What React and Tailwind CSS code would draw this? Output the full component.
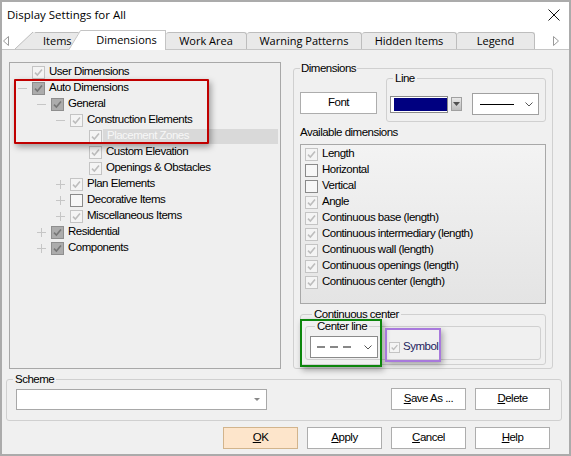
import React from 'react';

const UI = 'font-[Liberation_Sans,Arial,sans-serif] tracking-[-0.5px]';
const SEGOE = 'font-[Open_Sans,Noto_Sans,sans-serif]';

// checkbox in the three looks the dialog uses
function Check({ kind = 'light', size = 13 }) {
  const box = {
    light: 'border-[#c4c4c4] bg-[#f4f4f4]',
    gray: 'border-[#8e8e8e] bg-[#acacac]',
    empty: 'border-[#8a8a8a] bg-[#f7f7f7]',
  }[kind];
  const dim = size === 13 ? 'h-[13px] w-[13px]' : 'h-[11px] w-[11px]';
  const stroke = kind === 'gray' ? '#767676' : '#bdbdbd';
  return (
    <span className={`flex shrink-0 items-center justify-center border ${dim} ${box}`}>
      {kind !== 'empty' && (
        <svg width={size - 2} height={size - 2} viewBox="0 0 11 11">
          <path d="M2 5.6 L4.4 8 L9 2.6" fill="none" stroke={stroke} strokeWidth="1.6" />
        </svg>
      )}
    </span>
  );
}

function Expander({ type }) {
  if (!type) return <span className="w-[14px] shrink-0" />;
  return (
    <span className="flex w-[14px] shrink-0 items-center">
      <svg width="9" height="9" viewBox="0 0 9 9">
        <path d="M0 4.5 H9" stroke="#c6c6c6" strokeWidth="1" />
        {type === 'plus' && <path d="M4.5 0 V9" stroke="#c6c6c6" strokeWidth="1" />}
      </svg>
    </span>
  );
}

const indent = ['pl-[8px]', 'pl-[27px]', 'pl-[46px]', 'pl-[65px]'];

const tree = [
  { label: 'User Dimensions', level: 0, box: 'light' },
  { label: 'Auto Dimensions', level: 0, box: 'gray', exp: 'minus' },
  { label: 'General', level: 1, box: 'gray', exp: 'minus' },
  { label: 'Construction Elements', level: 2, box: 'light', exp: 'minus' },
  { label: 'Placement Zones', level: 3, box: 'light', selected: true },
  { label: 'Custom Elevation', level: 3, box: 'light' },
  { label: 'Openings & Obstacles', level: 3, box: 'light' },
  { label: 'Plan Elements', level: 2, box: 'light', exp: 'plus' },
  { label: 'Decorative Items', level: 2, box: 'empty', exp: 'plus' },
  { label: 'Miscellaneous Items', level: 2, box: 'light', exp: 'plus' },
  { label: 'Residential', level: 1, box: 'gray', exp: 'plus' },
  { label: 'Components', level: 1, box: 'gray', exp: 'plus' },
];

const dims = [
  ['Length', 'light'],
  ['Horizontal', 'empty'],
  ['Vertical', 'empty'],
  ['Angle', 'light'],
  ['Continuous base (length)', 'light'],
  ['Continuous intermediary (length)', 'light'],
  ['Continuous wall (length)', 'light'],
  ['Continuous openings (length)', 'light'],
  ['Continuous center (length)', 'light'],
];

const tabs = [
  { label: 'Items', w: 'w-[49px] justify-start pl-[10px]' },
  { label: 'Dimensions', w: 'w-[84px] justify-center' },
  { label: 'Work Area', w: 'w-[81px] justify-center' },
  { label: 'Warning Patterns', w: 'w-[115px] justify-center' },
  { label: 'Hidden Items', w: 'w-[95px] justify-center' },
  { label: 'Legend', w: 'w-[78px] justify-center' },
];

function Button({ children, w = 'w-[75px]', ok }) {
  return (
    <div
      className={`flex h-[22px] items-center justify-center border text-[11.5px] text-black ${UI} ${w} ${
        ok ? 'border-[#d2b48c] bg-[#fde5cb]' : 'border-[#adadad] bg-white'
      }`}
    >
      {children}
    </div>
  );
}

export default function App() {
  return (
    <div className="relative h-[456px] w-[571px] overflow-hidden border-2 border-[#ababab] bg-[#f0f0f0] text-black">
      {/* Title bar */}
      <div className="flex h-[25px] items-center justify-between bg-white pl-[5px] pr-[9px]">
        <span className={`text-[11.5px] ${SEGOE}`}>Display Settings for All</span>
        <svg width="12" height="12" viewBox="0 0 12 12">
          <path d="M0.5 0.5 L11.5 11.5 M11.5 0.5 L0.5 11.5" stroke="#111" strokeWidth="1" />
        </svg>
      </div>

      {/* Tab strip */}
      <div className={`relative flex h-[22px] items-end bg-white text-[11px] ${SEGOE}`}>
        <div className="flex h-[17px] w-[31px] items-center pl-[1px]">
          <svg width="6" height="10" viewBox="0 0 6 10">
            <path d="M5.5 0.5 L0.5 5 L5.5 9.5 Z" fill="none" stroke="#9a9a9a" />
          </svg>
        </div>
        {tabs.map((t) =>
          t.label === 'Dimensions' ? (
            <div
              key={t.label}
              className={`relative z-10 -mb-px flex h-[20px] items-center border-r border-t border-[#c4c4c4] bg-white pl-[6px] ${t.w}`}
            >
              {t.label}
            </div>
          ) : (
            <div
              key={t.label}
              className={`flex h-[17px] items-center rounded-t-[3px] border-r border-t border-[#bdbdbd] bg-[#e9e9e9] ${t.w}`}
            >
              {t.label}
            </div>
          )
        )}
        <div className="flex h-[17px] flex-1 items-center justify-end pr-[10px]">
          <svg width="6" height="10" viewBox="0 0 6 10">
            <path d="M0.5 0.5 L5.5 5 L0.5 9.5 Z" fill="none" stroke="#9a9a9a" />
          </svg>
        </div>
        {/* slanted tab edges */}
        <svg className="pointer-events-none absolute left-0 top-0 z-20" width="90" height="23" viewBox="0 0 90 23">
          <polygon points="13,22 31,5 33,5 33,22" fill="#e9e9e9" />
          <path d="M13 22 L31 5" stroke="#bdbdbd" fill="none" />
          <polygon points="67,23 78,3 82,3 82,23" fill="#ffffff" />
          <path d="M67 22.5 L78.5 3.5 L82 3.5" stroke="#c4c4c4" fill="none" />
        </svg>
      </div>

      {/* Tab page */}
      <div className="h-[403px] border-t border-[#c6c6c6]">
        <div className="mt-[12px] flex pl-[7px]">
          {/* Tree */}
          <div className={`h-[307px] w-[272px] border border-[#a8a8a8] bg-[#efefef] pt-[1px] text-[11.5px] ${UI}`}>
            {tree.map((n) => (
              <div key={n.label} className={`flex h-[16px] items-center ${indent[n.level]}`}>
                <Expander type={n.exp} />
                <Check kind={n.box} />
                {n.selected ? (
                  <span className="ml-px mr-[2px] flex h-[15px] flex-1 items-center bg-[#d9d9d9] pl-[4px] text-[#f7f7f7]">
                    {n.label}
                  </span>
                ) : (
                  <span className="pl-[4px]">{n.label}</span>
                )}
              </div>
            ))}
          </div>

          {/* Dimensions group */}
          <fieldset className={`ml-[12px] h-[307px] w-[260px] rounded-[3px] border border-[#d0d0d0] px-[6px] text-[11.5px] ${UI}`}>
            <legend className="px-px leading-[13px]">Dimensions</legend>
            <div className="-mt-[3px] flex items-start">
              <div className="mt-[20px]">
                <Button w="w-[77px]">Font</Button>
              </div>
              <fieldset className="ml-[9px] h-[50px] w-[160px] rounded-[3px] border border-[#d0d0d0] px-[3px]">
                <legend className="ml-[3px] px-[2px] leading-[13px]">Line</legend>
                <div className="mt-[8px] flex items-center">
                  <div className="flex h-[17px] w-[58px] items-center border border-[#8a8a8a] bg-white pl-[3px]">
                    <div className="h-[13px] w-[53px] bg-[#000080]" />
                  </div>
                  <div className="ml-[3px] flex h-[14px] w-[11px] items-center justify-center border border-[#a0a0a0] bg-linear-to-b from-[#e8e8e8] to-[#bdbdbd]">
                    <svg width="7" height="4" viewBox="0 0 7 4">
                      <path d="M0 0 H7 L3.5 4 Z" fill="#505050" />
                    </svg>
                  </div>
                  <div className="ml-[10px] flex h-[22px] w-[67px] items-center justify-between border border-[#a0a0a0] bg-white pl-[7px] pr-[5px]">
                    <div className="h-px w-[34px] bg-black" />
                    <svg width="8" height="5" viewBox="0 0 8 5">
                      <path d="M0.5 0.5 L4 4 L7.5 0.5" fill="none" stroke="#555" />
                    </svg>
                  </div>
                </div>
              </fieldset>
            </div>

            <div className="mt-[4px] leading-[13px]">Available dimensions</div>

            <div className="mt-[5px] h-[160px] w-[246px] border border-[#a8a8a8] bg-linear-to-b from-[#f3f3f3] to-[#e4e4e4] pl-[4px] pt-px">
              {dims.map(([label, kind]) => (
                <div key={label} className="flex h-[16px] items-center">
                  <Check kind={kind} />
                  <span className="pl-[4px]">{label}</span>
                </div>
              ))}
            </div>

            <fieldset className="mt-[4px] h-[57px] w-[246px] rounded-[3px] border border-[#d0d0d0] px-[4px]">
              <legend className="ml-[7px] px-[2px] leading-[13px]">Continuous center</legend>
              <fieldset className="-mt-px h-[40px] w-[236px] rounded-[3px] border border-[#d0d0d0] pl-[4px]">
                <legend className="ml-[5px] px-[2px] leading-[13px]">Center line</legend>
                <div className="mt-[3px] flex items-center">
                  <div className="flex h-[22px] w-[68px] items-center justify-between border border-[#8a8a8a] bg-white pl-[6px] pr-[5px]">
                    <svg width="34" height="2" viewBox="0 0 34 2">
                      <path d="M0 1 H8 M13 1 H21 M26 1 H34" stroke="#111" strokeWidth="1.2" />
                    </svg>
                    <svg width="8" height="5" viewBox="0 0 8 5">
                      <path d="M0.5 0.5 L4 4 L7.5 0.5" fill="none" stroke="#555" />
                    </svg>
                  </div>
                  <div className="ml-[11px] flex items-center">
                    <Check kind="light" size={11} />
                    <span className="pl-[3px] text-[#1c1c5c]">Symbol</span>
                  </div>
                </div>
              </fieldset>
            </fieldset>
          </fieldset>
        </div>

        {/* Scheme */}
        <fieldset className={`ml-[4px] mt-[4px] h-[48px] w-[556px] rounded-[3px] border border-[#d0d0d0] pl-[9px] pr-[11px] text-[11.5px] ${UI}`}>
          <legend className="-ml-[3px] px-[2px] leading-[13px]">Scheme</legend>
          <div className="mt-[2px] flex items-center">
            <div className="flex h-[21px] w-[251px] items-center justify-end border border-[#a8a8a8] bg-white pr-[6px]">
              <svg width="6" height="3" viewBox="0 0 6 3">
                <path d="M0 0 H6 L3 3 Z" fill="#888" />
              </svg>
            </div>
            <div className="ml-auto flex gap-[9px]">
              <Button w="w-[75px]"><span className="underline">S</span>ave As ...</Button>
              <Button><span className="underline">D</span>elete</Button>
            </div>
          </div>
        </fieldset>

        {/* Dialog buttons */}
        <div className="mt-[6px] flex justify-end gap-[9px] pr-[19px]">
          <Button ok><span className="underline">O</span>K</Button>
          <Button><span className="underline">A</span>pply</Button>
          <Button><span className="underline">C</span>ancel</Button>
          <Button><span className="underline">H</span>elp</Button>
        </div>
      </div>

      {/* Annotation frames */}
      <div className="pointer-events-none absolute left-[12px] top-[77px] h-[65px] w-[195px] rounded-[1px] border-2 border-[#c00000] shadow-[2px_3px_6px_rgba(0,0,0,0.35)]" />
      <div className="pointer-events-none absolute left-[298px] top-[317px] h-[48px] w-[82px] border-2 border-[#0c860c] shadow-[2px_3px_6px_rgba(0,0,0,0.35)]" />
      <div className="pointer-events-none absolute left-[383px] top-[326px] h-[34px] w-[56px] border-2 border-[#a879dc] shadow-[2px_3px_6px_rgba(0,0,0,0.3)]" />
    </div>
  );
}
